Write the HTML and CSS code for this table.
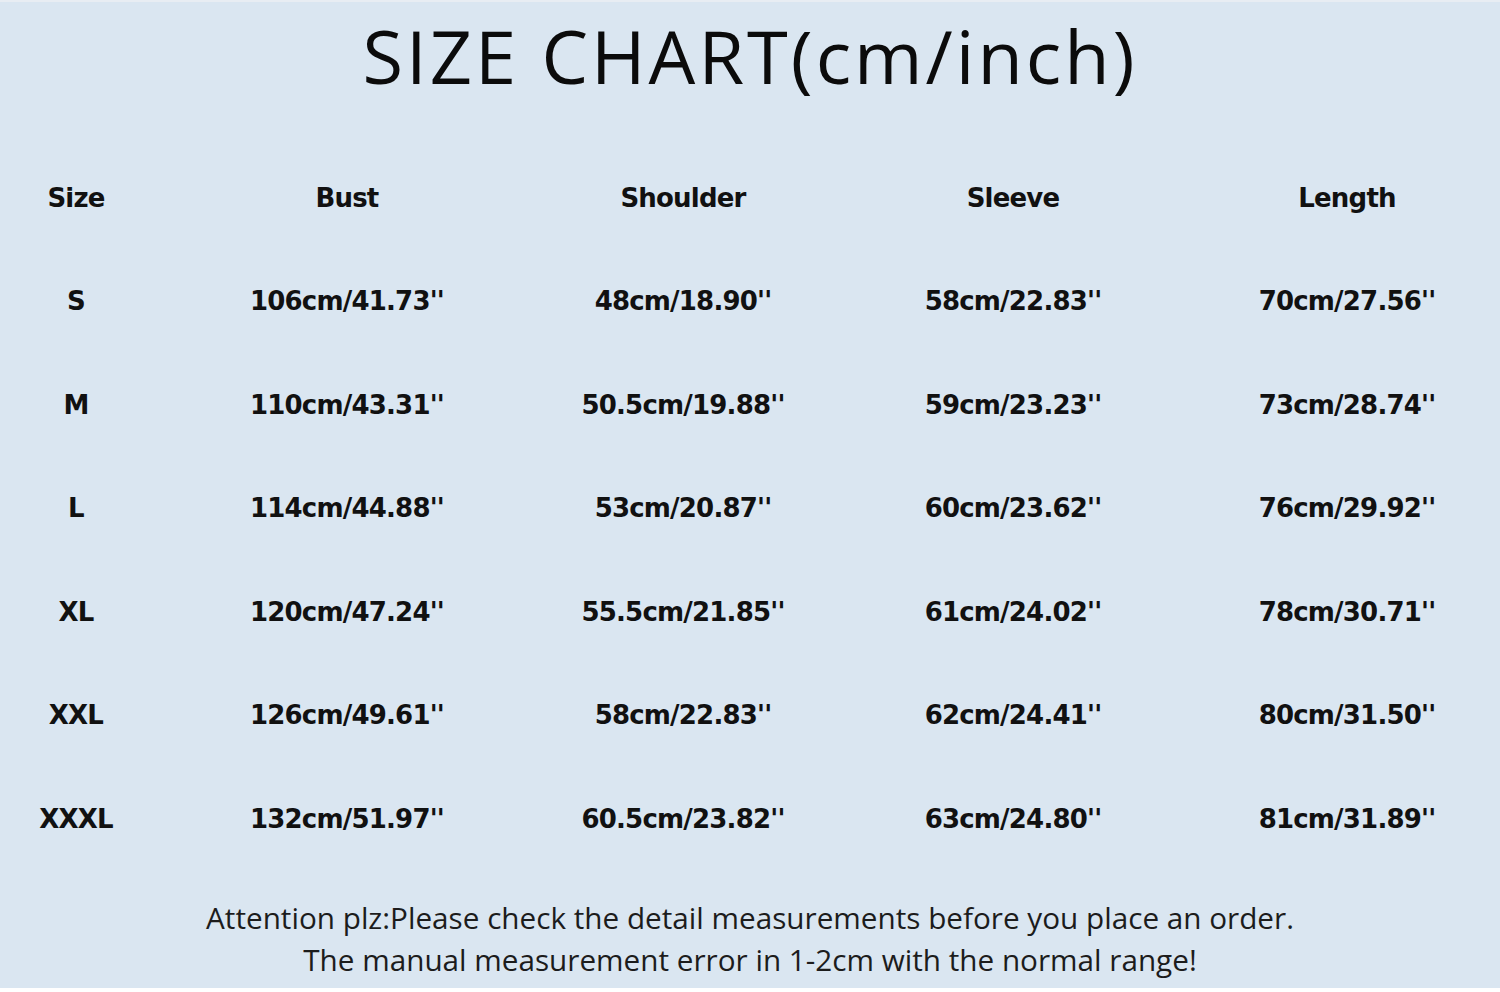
FILE: index.html
```html
<!DOCTYPE html>
<html lang="en">
<head>
<meta charset="utf-8">
<title>Size Chart</title>
<link rel="stylesheet" href="styles.css">
</head>
<body>
<div class="page">
  <h1 class="title">SIZE CHART(cm/inch)</h1>
  <div class="chart">
    <div class="cell head">Size</div><div class="cell head">Bust</div><div class="cell head">Shoulder</div><div class="cell head">Sleeve</div><div class="cell head">Length</div>
    <div class="cell">S</div><div class="cell">106cm/41.73''</div><div class="cell">48cm/18.90''</div><div class="cell">58cm/22.83''</div><div class="cell">70cm/27.56''</div>
    <div class="cell">M</div><div class="cell">110cm/43.31''</div><div class="cell">50.5cm/19.88''</div><div class="cell">59cm/23.23''</div><div class="cell">73cm/28.74''</div>
    <div class="cell">L</div><div class="cell">114cm/44.88''</div><div class="cell">53cm/20.87''</div><div class="cell">60cm/23.62''</div><div class="cell">76cm/29.92''</div>
    <div class="cell">XL</div><div class="cell">120cm/47.24''</div><div class="cell">55.5cm/21.85''</div><div class="cell">61cm/24.02''</div><div class="cell">78cm/30.71''</div>
    <div class="cell">XXL</div><div class="cell">126cm/49.61''</div><div class="cell">58cm/22.83''</div><div class="cell">62cm/24.41''</div><div class="cell">80cm/31.50''</div>
    <div class="cell">XXXL</div><div class="cell">132cm/51.97''</div><div class="cell">60.5cm/23.82''</div><div class="cell">63cm/24.80''</div><div class="cell">81cm/31.89''</div>
  </div>
  <div class="note">
    <p class="note-line">Attention plz:Please check the detail measurements before you place an order.</p>
    <p class="note-line">The manual measurement error in 1-2cm with the normal range!</p>
  </div>
</div>
</body>
</html>
```

FILE: styles.css
```css
html, body {
  margin: 0;
  padding: 0;
  background: #ffffff;
}

.page {
  width: 1500px;
  height: 988px;
  box-sizing: border-box;
  background: #dae6f1;
  border-top: 2px solid #e8edf3;
  display: flex;
  flex-direction: column;
  overflow: hidden;
}

.title {
  margin: 0;
  height: 144px;
  box-sizing: border-box;
  padding-top: 17px;
  text-align: center;
  font-family: "Open Sans", "DejaVu Sans", sans-serif;
  font-weight: 400;
  font-size: 74px;
  line-height: 74px;
  letter-spacing: 3px;
  color: #0b0b0b;
}

.chart {
  display: grid;
  grid-template-columns: 152px 390px 282px 378px 290px;
  grid-auto-rows: 103.5px;
}

.cell {
  display: flex;
  align-items: center;
  justify-content: center;
  font-family: "DejaVu Sans", Tahoma, sans-serif;
  font-weight: 700;
  font-size: 26px;
  letter-spacing: -0.8px;
  color: #111111;
  white-space: nowrap;
}

.note {
  padding-top: 26px;
  text-align: center;
  font-family: "Open Sans", "Noto Sans", sans-serif;
  font-size: 29.7px;
  line-height: 42px;
  color: #1c1c1c;
}

.note-line {
  margin: 0;
}
```
